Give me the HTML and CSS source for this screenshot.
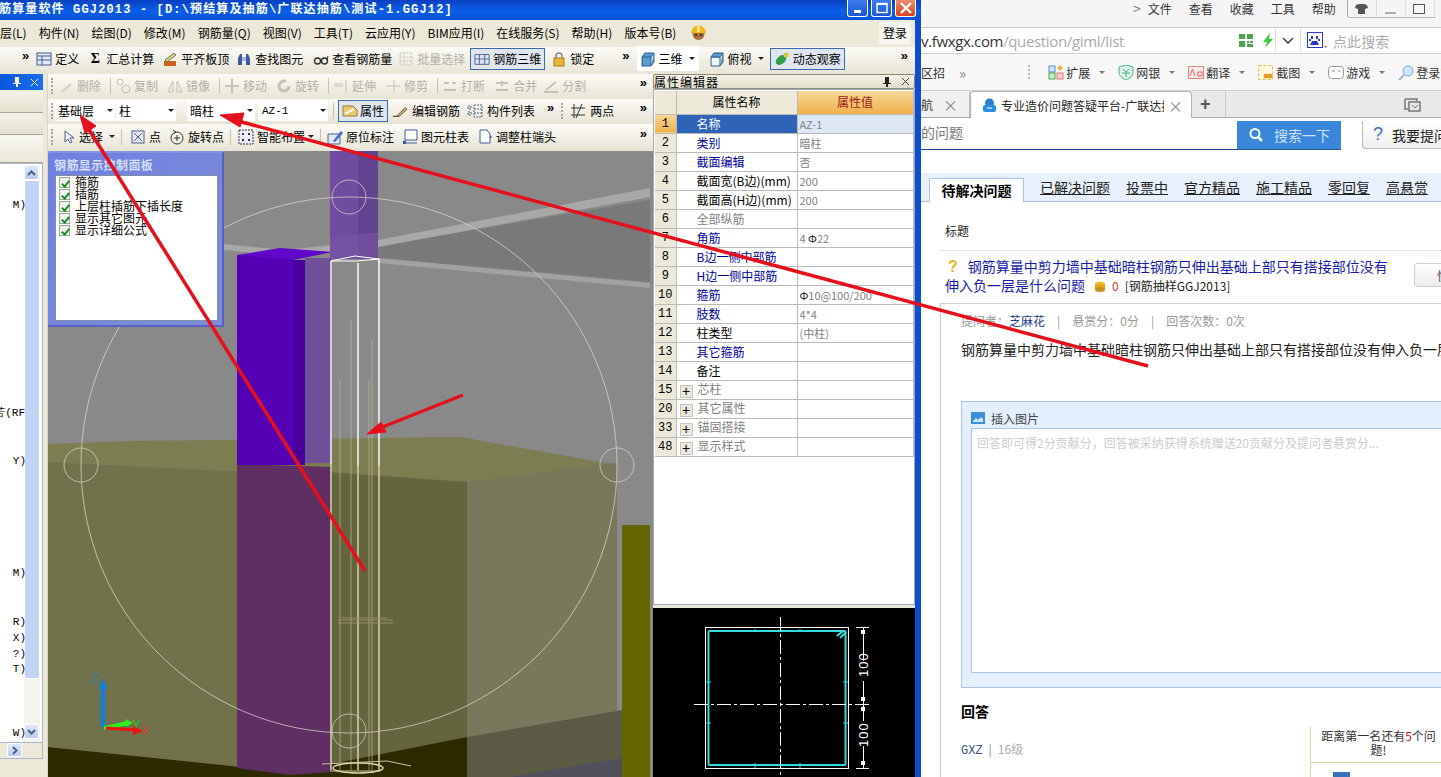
FILE: index.html
```html
<!DOCTYPE html>
<html lang="zh">
<head>
<meta charset="utf-8">
<title>钢筋算量软件 GGJ2013</title>
<link rel="stylesheet" href="styles.css">
</head>
<body>
<div class="desktop">

<section class="app">
  <header class="titlebar">
    <span class="title-text">筋算量软件 GGJ2013 - [D:\预结算及抽筋\广联达抽筋\测试-1.GGJ12]</span>
    <div class="winbtns">
      <span class="wb"><svg width="20" height="16"><rect x="6" y="10" width="7" height="3" fill="#fff"/></svg></span>
      <span class="wb"><svg width="20" height="16"><rect x="5" y="3.5" width="10" height="9" fill="none" stroke="#fff" stroke-width="1.4"/><rect x="5" y="3" width="10" height="2" fill="#fff"/></svg></span>
      <span class="wb wb-close"><svg width="20" height="16"><path d="M5 3l10 10M15 3L5 13" stroke="#fff" stroke-width="2.4"/></svg></span>
    </div>
  </header>

  <nav class="menubar">
    <span>层(L)</span><span>构件(N)</span><span>绘图(D)</span><span>修改(M)</span><span>钢筋量(Q)</span><span>视图(V)</span><span>工具(T)</span><span>云应用(Y)</span><span>BIM应用(I)</span><span>在线服务(S)</span><span>帮助(H)</span><span>版本号(B)</span>
    <svg class="helmet" width="17" height="17" viewBox="0 0 17 17"><circle cx="8.5" cy="10" r="6" fill="#a8703c"/><path d="M1 9a7.5 7.5 0 0 1 15 0z" fill="#f2b81e"/><rect x="7" y="2" width="3" height="6" fill="#ffe27a"/><circle cx="6" cy="11" r="1" fill="#222"/><circle cx="11" cy="11" r="1" fill="#222"/></svg>
    <span class="login">登录</span>
  </nav>

  <div class="tb tb-main">
    <span class="chev chev-first">»</span>
    <span class="tool t-def"><svg class="ic" viewBox="0 0 16 16"><rect x="1" y="2" width="14" height="12" fill="#dfe8f6" stroke="#44608c"/><path d="M1 5h14M6 5v9M1 9h14" stroke="#44608c"/></svg>定义</span>
    <span class="tool t-sum"><span class="sigma">Σ</span>汇总计算</span>
    <span class="tool t-flat"><svg class="ic" viewBox="0 0 16 16"><rect x="2" y="10" width="12" height="5" fill="#c8641c"/><path d="M3 9l9-7 2 2-9 7z" fill="#e8d24a" stroke="#5a7c9c"/></svg>平齐板顶</span>
    <span class="tool"><svg class="ic" viewBox="0 0 16 16"><path d="M2 14V7l2-4h2v11zM10 14V3h2l2 4v7z" fill="#3d5c9c"/><rect x="6" y="6" width="4" height="4" fill="#9fb7df"/></svg>查找图元</span>
    <span class="tool t-see"><svg class="ic" viewBox="0 0 16 16"><circle cx="4.5" cy="10" r="3" fill="none" stroke="#333" stroke-width="1.4"/><circle cx="11.5" cy="10" r="3" fill="none" stroke="#333" stroke-width="1.4"/><path d="M7 9h2M14 9l1-4" stroke="#333"/></svg>查看钢筋量</span>
    <span class="tool off t-batch"><svg class="ic" viewBox="0 0 16 16"><path d="M2 2h12v12H2zM2 6h12M2 10h12M6 2v12" fill="none" stroke="#c9c6b8" stroke-dasharray="2 1"/></svg>批量选择</span>
    <span class="tool on t-3d"><svg class="ic" viewBox="0 0 18 16"><path d="M1 3h16v11H1zM6 3v11M12 3v11M1 8h16" fill="none" stroke="#445a86"/></svg>钢筋三维</span>
    <span class="tool t-lock"><svg class="ic" viewBox="0 0 16 16"><rect x="3" y="7" width="10" height="8" fill="#e8b83a" stroke="#a5791a"/><path d="M5 7V5a3 3 0 0 1 6 0v2" fill="none" stroke="#888" stroke-width="1.5"/></svg>锁定</span>
    <span class="chev chev-a">»</span>
    <span class="combo-white">
      <span class="tool tight"><svg class="ic" viewBox="0 0 16 16"><path d="M2 6h9v9H2zM2 6l3-4h9l-3 4M11 15l3-4V2" fill="#5b9bd0" stroke="#2c5f8c"/></svg>三维</span><span class="caret"></span>
    </span>
    <span class="tool tight t-view"><svg class="ic" viewBox="0 0 16 16"><path d="M2 6h9v9H2z" fill="#eef6fb" stroke="#2c5f8c"/><path d="M2 6l3-4h9l-3 4zM11 15l3-4V2" fill="#5b9bd0" stroke="#2c5f8c"/></svg>俯视</span><span class="caret"></span>
    <span class="tool on t-orbit"><svg class="ic" viewBox="0 0 16 16"><ellipse cx="7" cy="9" rx="6" ry="4" transform="rotate(-40 7 9)" fill="#2f9e46"/><circle cx="12" cy="4" r="2.5" fill="#d8c83a"/></svg>动态观察</span>
    <span class="chev chev-end">»</span>
  </div>

  <div class="work">
    <aside class="side">
      <div class="side-head"><svg width="10" height="12" viewBox="0 0 10 12"><path d="M3 1h4v6h2v1H6v3H4V8H1V7h2z" fill="#fff"/></svg><svg width="9" height="9" viewBox="0 0 9 9"><path d="M1 1l7 7M8 1L1 8" stroke="#fff"/></svg></div>
      <div class="side-tab"></div>
      <div class="side-tab"></div>
      <div class="side-tab tall"></div>
      <div class="side-list">
        <div class="side-text">
          <span class="st st1">M)</span>
          <span class="st st2">苦(RF</span>
          <span class="st st3">Y)</span>
          <span class="st st4">M)</span>
          <span class="st st5">R)</span>
          <span class="st st6">X)</span>
          <span class="st st7">?)</span>
          <span class="st st8">T)</span>
          <span class="st st9">W)</span>
        </div>
        <div class="vscroll">
          <span class="sbtn"><svg width="9" height="6" viewBox="0 0 9 6"><path d="M1 5l3.500-3.500L8 5" fill="none" stroke="#4d6185" stroke-width="2"/></svg></span>
          <span class="thumb"></span>
          <span class="sbtn"><svg width="9" height="6" viewBox="0 0 9 6"><path d="M1 1l3.500 3.500L8 1" fill="none" stroke="#4d6185" stroke-width="2"/></svg></span>
        </div>
      </div>
      <div class="hscroll"><span class="sbtn sbtn-h"><svg width="6" height="9" viewBox="0 0 6 9"><path d="M1 1l3.500 3.500L1 8" fill="none" stroke="#4d6185" stroke-width="2"/></svg></span></div>
    </aside>

    <div class="center">
      <div class="tb tb-sub">
        <span class="grip"></span>
        <span class="tool off"><svg class="ic" viewBox="0 0 16 16"><path d="M2 14l10-9 2 2-8 7z" fill="#d8d5c8"/></svg>删除</span><span class="sep"></span>
        <span class="tool off"><svg class="ic" viewBox="0 0 16 16"><circle cx="5" cy="4" r="3" fill="none" stroke="#c5c2b4"/><circle cx="11" cy="11" r="4" fill="none" stroke="#c5c2b4"/></svg>复制</span>
        <span class="tool off"><svg class="ic" viewBox="0 0 16 16"><path d="M6 3v11H1zM10 3v11h5z" fill="none" stroke="#c5c2b4"/></svg>镜像</span><span class="sep"></span>
        <span class="tool off"><svg class="ic" viewBox="0 0 16 16"><path d="M8 1v14M1 8h14" stroke="#c5c2b4" stroke-width="2"/></svg>移动</span>
        <span class="tool off"><svg class="ic" viewBox="0 0 16 16"><path d="M13 8a5 5 0 1 1-3-4.500" fill="none" stroke="#c5c2b4" stroke-width="3"/></svg>旋转</span><span class="sep"></span>
        <span class="tool off"><svg class="ic" viewBox="0 0 16 16"><path d="M1 8h9M1 6h9M13 2v12" stroke="#c5c2b4"/></svg>延伸</span>
        <span class="tool off"><svg class="ic" viewBox="0 0 16 16"><path d="M1 8h14M9 2v12" stroke="#c5c2b4"/></svg>修剪</span><span class="sep"></span>
        <span class="tool off"><svg class="ic" viewBox="0 0 16 16"><path d="M2 12h12M2 5h5M10 5h4" stroke="#c5c2b4" stroke-width="2"/></svg>打断</span>
        <span class="tool off"><svg class="ic" viewBox="0 0 16 16"><path d="M2 12h12M2 5h12M8 3v5" stroke="#c5c2b4" stroke-width="2"/></svg>合并</span>
        <span class="tool off t-split"><svg class="ic" viewBox="0 0 16 16"><path d="M1 14h14M3 12L13 4" stroke="#c5c2b4" stroke-width="2"/></svg>分割</span>
        <span class="chev chev-sub">»</span>
      </div>

      <div class="tb tb-attr">
        <span class="grip"></span>
        <span class="combo c1">基础层<span class="caret"></span></span>
        <span class="combo c2">柱<span class="caret"></span></span>
        <span class="combo c3">暗柱<span class="caret"></span></span>
        <span class="combo c4">AZ-1<span class="caret"></span></span>
        <span class="sep"></span>
        <span class="tool on t-attr"><svg class="ic" viewBox="0 0 16 16"><path d="M1 3h10l4 4v6H1z" fill="#e9c978" stroke="#a5791a"/><path d="M3 11l9-5" stroke="#fff" stroke-width="2"/></svg>属性</span>
        <span class="tool t-edit"><svg class="ic" viewBox="0 0 18 16"><path d="M1 14h7" stroke="#222"/><path d="M6 13l9-9 2 2-9 8z" fill="#d9b04a" stroke="#555"/></svg>编辑钢筋</span>
        <span class="tool t-list"><svg class="ic" viewBox="0 0 16 16"><path d="M1 3h3v3H1zM1 9h3v3H1zM7 2h8v12H7zM7 6h8M7 10h8" fill="none" stroke="#4d6185" stroke-dasharray="2 1"/></svg>构件列表</span>
        <span class="chev chev-list">»</span>
        <span class="grip grip-b"></span>
        <span class="tool t-two"><svg class="ic" viewBox="0 0 16 16"><path d="M1 5h14M1 12h14M4 1v14M12 1L6 15" stroke="#333"/></svg>两点</span>
        <span class="chev chev-sub">»</span>
      </div>

      <div class="tb tb-draw">
        <span class="grip"></span>
        <span class="tool t-sel"><svg class="ic" viewBox="0 0 16 16"><path d="M5 2v11l3-3 2 4 2-1-2-4h4z" fill="#eef" stroke="#4d6185"/></svg>选择<span class="caret"></span></span><span class="sep"></span>
        <span class="tool t-pt"><svg class="ic" viewBox="0 0 16 16"><rect x="2" y="2" width="12" height="12" fill="#e8ecf8" stroke="#4d5c8c"/><path d="M4 4l8 8M12 4l-8 8" stroke="#4d5c8c"/></svg>点</span>
        <span class="tool t-rot"><svg class="ic" viewBox="0 0 16 16"><circle cx="8" cy="9" r="6" fill="none" stroke="#333"/><path d="M8 6v6M5 9h6M4 1l3 2-3 2" fill="none" stroke="#333"/></svg>旋转点</span><span class="sep"></span>
        <span class="tool t-smart"><svg class="ic" viewBox="0 0 16 16"><rect x="1" y="1" width="14" height="14" fill="#eef" stroke="#333" stroke-dasharray="2 1"/><path d="M4 4h2v2H4zM10 4h2v2h-2zM4 10h2v2H4zM10 10h2v2h-2z" fill="#333"/></svg>智能布置<span class="caret"></span></span><span class="sep"></span>
        <span class="tool t-orig"><svg class="ic" viewBox="0 0 16 16"><path d="M1 5h12v10H1z" fill="#dfe8f6" stroke="#4d6185"/><path d="M6 12l8-10 2 2-8 9z" fill="#3d6cc4"/></svg>原位标注</span>
        <span class="tool t-tbl"><svg class="ic" viewBox="0 0 16 16"><path d="M3 1h12v10H3z" fill="#fff" stroke="#3d5c9c"/><path d="M1 14h14M3 11v3" stroke="#3d5c9c"/><rect x="1" y="12" width="3" height="3" fill="#3d5c9c"/></svg>图元柱表</span>
        <span class="tool t-adj"><svg class="ic" viewBox="0 0 16 16"><path d="M3 1h7l3 4v9H3z" fill="#fff" stroke="#3d5c9c"/><path d="M13 6l2 2-2 2z" fill="#3d5c9c"/></svg>调整柱端头</span>
        <span class="chev chev-sub">»</span>
      </div>

      <div class="scene">
        <svg class="scene-svg" width="602" height="626" viewBox="48 151 602 626">
          <rect x="48" y="151" width="602" height="626" fill="#898989"/>
          <polygon points="378,246 650,200 650,282 378,258" fill="#797979"/>
          <polygon points="224,244 285,250 378,240 650,188 650,197 378,247 285,256 224,250" fill="#a8a8a8"/>
          <polygon points="378,258 650,283 650,288 378,263" fill="#a2a2a2"/>
          <rect x="622" y="525" width="28" height="252" fill="#666600"/>
          <polygon points="48,444 130,441 460,437 617,465 467,482 48,462" fill="#7d7d52"/>
          <polygon points="48,462 467,482 467,737 290,772 48,747" fill="#71714b"/>
          <polygon points="300,470 467,482 467,737 300,770" fill="#64643f"/>
          <polygon points="467,482 622,462 622,710 467,737" fill="#78785d"/>
          <polygon points="617,460 622,460 622,710 617,711" fill="#8a8a8a"/>
          <polygon points="467,737 622,710 622,777 467,777" fill="#5b5b45"/>
          <polygon points="510,777 622,758 622,777" fill="#50505a"/>
          <polygon points="48,747 290,772 467,737 467,777 48,777" fill="#2d2a00"/>
          <polygon points="237,464 331,467 331,772 290,775 237,768" fill="#5f2f63"/>
          <rect x="237" y="255" width="56" height="210" fill="#5500b5"/>
          <rect x="293" y="260" width="12" height="205" fill="#4a009c"/>
          <rect x="305" y="258" width="27" height="205" fill="#71509a"/>
          <polygon points="237,255 280,248 333,252 293,260" fill="#5f08c8"/>
          <rect x="330" y="151" width="28" height="108" fill="#6f4ca0"/>
          <rect x="358" y="151" width="20" height="108" fill="#624390"/>
          <polygon points="330,238 378,232 378,259 330,259" fill="#7b5aa8" opacity=".5"/>
          <g fill="none" stroke="#ddd8cc" opacity=".75">
            <circle cx="349" cy="465" r="268" stroke-width="1"/>
            <circle cx="349" cy="197" r="17"/>
            <circle cx="81" cy="465" r="17"/>
            <circle cx="617" cy="465" r="17"/>
            <circle cx="349" cy="731" r="17"/>
          </g>
          <g fill="none">
            <path d="M331 261h26l22-2-24-3-24 5" stroke="#fff"/>
            <path d="M331 261v203M358 263v203M379 259v207" stroke="#fff" stroke-width="1.500" opacity=".95"/>
            <path d="M331 464v306M358 466v304M379 466v304" stroke="#d9d4a8" stroke-width="1.500"/>
            <path d="M351 320v450M340 380v390M369 380v390M372 340v430" stroke="#c9c4a0" stroke-width="1" opacity=".6"/>
            <path d="M338 620h55M338 623h55M342 618h45" stroke="#9c9672" opacity=".8"/>
            <ellipse cx="358" cy="768" rx="25" ry="5" stroke="#d9d4a8" stroke-width="1.500"/>
            <path d="M322 764l65-3 24 5M330 771h50" stroke="#c9c4a0"/>
          </g>
          <g>
            <path d="M103 727v-40" stroke="#0a7fe8" stroke-width="4"/>
            <path d="M103 678l-4 11h8z" fill="#0a7fe8"/>
            <text x="91" y="683" class="axis axis-z">Z</text>
            <path d="M104 728l24-5" stroke="#2cf01c" stroke-width="4"/>
            <path d="M133 723l-8-4 1 8z" fill="#2cf01c"/>
            <text x="132" y="729" class="axis axis-y">Y</text>
            <path d="M106 728l30 2" stroke="#f01010" stroke-width="3"/>
            <path d="M143 731l-10-5v9z" fill="#f01010"/>
            <text x="141" y="735" class="axis axis-x">X</text>
          </g>
        </svg>
        <div class="panel">
          <div class="panel-title">钢筋显示控制面板</div>
          <div class="panel-body">
            <label class="chk"><span class="box"></span>箍筋</label>
            <label class="chk"><span class="box"></span>插筋</label>
            <label class="chk"><span class="box"></span>上层柱插筋下插长度</label>
            <label class="chk"><span class="box"></span>显示其它图元</label>
            <label class="chk"><span class="box"></span>显示详细公式</label>
          </div>
        </div>
      </div>
    </div>

    <aside class="props">
      <div class="props-head"><span>属性编辑器</span><span class="props-ctl"><svg width="10" height="12" viewBox="0 0 10 12"><path d="M3 1h4v6h2v1H6v3H4V8H1V7h2z" fill="#222"/></svg><svg width="9" height="9" viewBox="0 0 9 9"><path d="M1 1l7 7M8 1L1 8" stroke="#444"/></svg></span></div>
      <div class="props-grid">
        <table class="pt">
          <colgroup><col class="col-a"><col class="col-b"><col class="col-c"></colgroup>
          <tr class="hd"><th></th><th>属性名称</th><th class="hd-val">属性值</th></tr>
          <tr class="sel"><th>1</th><td class="nm">名称</td><td class="v">AZ-1</td></tr>
          <tr><th>2</th><td class="nm blue">类别</td><td class="v">暗柱</td></tr>
          <tr><th>3</th><td class="nm blue">截面编辑</td><td class="v">否</td></tr>
          <tr><th>4</th><td class="nm">截面宽(B边)(mm)</td><td class="v">200</td></tr>
          <tr><th>5</th><td class="nm">截面高(H边)(mm)</td><td class="v">200</td></tr>
          <tr><th>6</th><td class="nm gray">全部纵筋</td><td class="v"></td></tr>
          <tr><th>7</th><td class="nm blue">角筋</td><td class="v">4 <b class="rb">Φ</b>22</td></tr>
          <tr><th>8</th><td class="nm blue">B边一侧中部筋</td><td class="v"></td></tr>
          <tr><th>9</th><td class="nm blue">H边一侧中部筋</td><td class="v"></td></tr>
          <tr><th>10</th><td class="nm blue">箍筋</td><td class="v"><b class="rb">Φ</b>10@100/200</td></tr>
          <tr><th>11</th><td class="nm blue">肢数</td><td class="v">4*4</td></tr>
          <tr><th>12</th><td class="nm">柱类型</td><td class="v">(中柱)</td></tr>
          <tr><th>13</th><td class="nm blue">其它箍筋</td><td class="v"></td></tr>
          <tr><th>14</th><td class="nm">备注</td><td class="v"></td></tr>
          <tr><th>15</th><td class="nm gray grp"><span class="plus">+</span>芯柱</td><td class="v"></td></tr>
          <tr><th>20</th><td class="nm gray grp"><span class="plus">+</span>其它属性</td><td class="v"></td></tr>
          <tr><th>33</th><td class="nm gray grp"><span class="plus">+</span>锚固搭接</td><td class="v"></td></tr>
          <tr><th>48</th><td class="nm gray grp"><span class="plus">+</span>显示样式</td><td class="v"></td></tr>
        </table>
      </div>
      <div class="preview">
        <svg width="262" height="170" viewBox="653 607 262 170">
          <rect x="705.500" y="626.500" width="143" height="141" fill="none" stroke="#fff"/>
          <rect x="708.500" y="630" width="137" height="134" rx="1" fill="none" stroke="#30dcdc" stroke-width="2"/>
          <path d="M840 637l6-6M837 635l6-5" stroke="#30dcdc" stroke-width="2"/>
          <path d="M780.500 616v161M694 703.500h177" stroke="#fff" stroke-dasharray="14 3 3 3"/>
          <path d="M706 681h5M706 722h5M843 681h5M843 722h5M755 631v-3M800 631v-3M755 762v5M800 762v5" stroke="#30dcdc"/>
          <path d="M863.500 627v33M863.500 680v40M863.500 745v22M856 626.500h13M856 767.500h13" stroke="#fff"/>
          <path d="M861 629h4v4h-4zM861 696h4v4h-4zM861 706h4v4h-4zM861 760h4v4h-4z" fill="#fff"/>
          <text class="dim" transform="translate(868 676) rotate(-90)">100</text>
          <text class="dim" transform="translate(868 746) rotate(-90)">100</text>
        </svg>
      </div>
    </aside>
  </div>
</section>

<section class="browser">
  <div class="b-top">
    <span class="b-chev">&gt;</span>
    <span>文件</span><span>查看</span><span>收藏</span><span>工具</span><span>帮助</span>
    <div class="b-win">
      <span class="bw"><svg width="13" height="12" viewBox="0 0 13 12"><path d="M1 2l3-1h5l3 1 1 3-3 1v5H3V6L0 5z" fill="#555"/></svg></span>
      <span class="bw"><svg width="13" height="12" viewBox="0 0 13 12"><path d="M1 10h11" stroke="#666"/></svg></span>
      <span class="bw"><svg width="13" height="12" viewBox="0 0 13 12"><rect x=".5" y="1.500" width="11" height="9" fill="none" stroke="#555"/></svg></span>
    </div>
  </div>
  <div class="b-addr">
    <span class="url"><span class="url-d">v.fwxgx.com</span>/question/giml/list</span>
    <svg class="qr" width="14" height="13" viewBox="0 0 14 13"><path d="M0 0h6v5H0zM8 0h6v5H8zM0 7h6v6H0zM8 7h2v2H8zM11 7h3v2h-3zM8 10h6v3H8z" fill="#4aa84a"/></svg>
    <svg class="bolt" width="12" height="15" viewBox="0 0 12 15"><path d="M8 0L1 9h4l-2 6 8-9H7z" fill="#3dcc3d"/></svg>
    <span class="addr-sep"></span>
    <svg class="dd" width="12" height="7" viewBox="0 0 12 7"><path d="M1 1l5 5 5-5" fill="none" stroke="#444" stroke-width="1.600"/></svg>
    <span class="addr-sep"></span>
    <svg class="paw" width="20" height="17" viewBox="0 0 20 17"><rect x=".5" y=".5" width="15" height="15" fill="#fff" stroke="#2a3ac8"/><path d="M4 4h2v3H4zM9 4h2v3H9zM2 7h2v2H2zM11 7h2v2h-2zM5 9h5l2 4H3z" fill="#2a3ac8"/><path d="M17 14h3l-1.500 2z" fill="#777"/></svg>
    <span class="srch">点此搜索</span>
  </div>
  <div class="b-bar">
    <span class="bm-first">区招</span><span class="bm-more">»</span>
    <span class="bm-grip"></span>
    <span class="bm"><svg width="16" height="15" viewBox="0 0 16 15"><rect x="1" y="1" width="6" height="6" fill="#cfe4fa" stroke="#4d8fd8"/><rect x="1" y="8" width="6" height="6" fill="#cdeccc" stroke="#4aa84a"/><rect x="9" y="8" width="6" height="6" fill="#f7cfcf" stroke="#d87a7a"/><path d="M12 0l3 3-3 3-3-3z" fill="#f0b030"/></svg>扩展</span><span class="caret"></span>
    <span class="bm"><svg width="16" height="15" viewBox="0 0 16 15"><path d="M8 0l7 2v5c0 4-3 6-7 8-4-2-7-4-7-8V2z" fill="#e0f6ec" stroke="#3fb27f"/><path d="M5 4l3 3 3-3M4 8h8M8 7v5" fill="none" stroke="#3fb27f"/></svg>网银</span><span class="caret"></span>
    <span class="bm"><svg width="16" height="15" viewBox="0 0 16 15"><rect x=".5" y="1.500" width="15" height="12" fill="#fde8e8" stroke="#d88"/><path d="M2 11l2.500-7L7 11M10 7h4v4h-4z" fill="none" stroke="#d66"/></svg>翻译</span><span class="caret"></span>
    <span class="bm"><svg width="16" height="15" viewBox="0 0 16 15"><rect x=".5" y=".5" width="14" height="14" fill="#fff8e0" stroke="#e6b84a" stroke-dasharray="3 2"/><circle cx="8" cy="11" r="2.500" fill="#e89a2a"/><circle cx="12" cy="11" r="2.500" fill="#e89a2a"/></svg>截图</span><span class="caret"></span>
    <span class="bm"><svg width="16" height="15" viewBox="0 0 16 15"><rect x=".5" y="1.500" width="15" height="12" rx="3" fill="#fff" stroke="#999"/><path d="M4 6h3M10 6h2" stroke="#6a6"/></svg>游戏</span><span class="caret"></span>
    <span class="bm"><svg width="16" height="15" viewBox="0 0 16 15"><circle cx="10" cy="6" r="5" fill="#cfe6fb" stroke="#6fa8dc"/><path d="M6 10l-5 5" stroke="#a0b4c8" stroke-width="2"/></svg>登录管家</span>
  </div>
  <div class="b-tabs">
    <span class="tab-old">航<span class="tab-x">×</span></span>
    <span class="tab-cur"><svg width="15" height="15" viewBox="0 0 15 15"><circle cx="7.500" cy="5" r="4.500" fill="#2a7fd0"/><rect x="1" y="7" width="13" height="7" rx="2" fill="#2a8fe0"/><path d="M5 10h5" stroke="#fff"/></svg><span class="tab-label">专业造价问题答疑平台-广联达抽</span><span class="tab-x">×</span></span>
    <span class="tab-add">+</span>
    <svg class="tab-tool" width="18" height="14" viewBox="0 0 18 14"><path d="M1 1h12v2M1 1v10h3M5 4h11v9H5z" fill="none" stroke="#777" stroke-width="1.500"/><path d="M8 7l3 3 3-3" fill="none" stroke="#777"/></svg>
  </div>
  <div class="page">
    <div class="searchrow">
      <div class="searchbox">的问题</div>
      <button class="searchbtn"><svg width="16" height="16" viewBox="0 0 16 16"><circle cx="7" cy="6.500" r="4.500" fill="none" stroke="#fff" stroke-width="2"/><path d="M10 10l4 4" stroke="#fff" stroke-width="2.500"/></svg>搜索一下</button>
      <button class="askbtn"><span class="qm">?</span>我要提问</button>
    </div>

    <div class="qtabs">
      <span class="qtab-on">待解决问题</span>
      <a>已解决问题</a><a>投票中</a><a>官方精品</a><a>施工精品</a><a>零回复</a><a>高悬赏</a>
    </div>

    <div class="th-label">标题</div>
    <div class="qrow">
      <div class="qtitle"><span class="qicon">?</span>钢筋算量中剪力墙中基础暗柱钢筋只伸出基础上部只有搭接部位没有伸入负一层是什么问题<svg class="coin" width="12" height="11" viewBox="0 0 12 11"><ellipse cx="6" cy="3" rx="5" ry="2.500" fill="#f1c02c"/><rect x="1" y="3" width="10" height="6" fill="#e0a81e"/><ellipse cx="6" cy="8.500" rx="5" ry="2.500" fill="#c9901a"/></svg><span class="zero">0</span><span class="qcat">[钢筋抽样GGJ2013]</span></div>
      <button class="quick">快</button>
    </div>

    <div class="qbox">
      <div class="meta">提问者：<a>芝麻花</a><i>|</i>悬赏分：0分<i>|</i>回答次数：0次</div>
      <div class="body-text">钢筋算量中剪力墙中基础暗柱钢筋只伸出基础上部只有搭接部位没有伸入负一层是什么问题</div>
      <div class="editor">
        <div class="ed-bar"><svg width="14" height="12" viewBox="0 0 14 12"><rect width="14" height="12" fill="#3d8ed8"/><path d="M2 9l3-3 2 2 3-3 2 2v3H2z" fill="#cfe6fb"/></svg>插入图片</div>
        <div class="ed-area">回答即可得2分贡献分，回答被采纳获得系统赠送20贡献分及提问者悬赏分...</div>
      </div>
      <div class="ans">
        <h4>回答</h4>
        <div class="ans-user"><a>GXZ</a><i>|</i>16级</div>
        <div class="rank"><div class="rank-t">距离第一名还有<em>5</em>个问题!</div><span class="rank-ic"></span></div>
      </div>
    </div>
  </div>
</section>

<svg class="arrows" width="1441" height="777" viewBox="0 0 1441 777">
  <g fill="#e5101c" stroke="#e5101c">
    <path d="M1148 366L238 121" stroke-width="3.500"/>
    <path d="M220 115l24-2-4 14z"/>
    <path d="M365 571L88 128" stroke-width="3.500"/>
    <path d="M80 115l16 11-11 7z"/>
    <path d="M463 395L380 428" stroke-width="3"/>
    <path d="M367 434l14-12 5 10z"/>
  </g>
</svg>

</div>
</body>
</html>
```

FILE: styles.css
```css
* { box-sizing: border-box; }
html, body { margin: 0; padding: 0; height: 100%; overflow: hidden; }
body { font: 12px "Noto Sans CJK SC", "Liberation Sans", sans-serif; color: #000; }
.desktop { position: relative; display: flex; width: 1441px; height: 777px; overflow: hidden; }

/* ---- application window ---- */
.app { width: 921px; height: 777px; flex: none; display: flex; flex-direction: column; background: #ece9d8; border-right: 6px solid #0a4fd0; position: relative; }
.titlebar { height: 20px; flex: none; display: flex; align-items: center; justify-content: space-between; background: linear-gradient(#0a3fc0, #0a5ee8 55%, #0653d8); margin-right: -6px; padding-right: 6px; overflow: hidden; }
.title-text { color: #fff; font: 700 12px "Liberation Mono", "Noto Sans CJK SC", monospace; letter-spacing: 1.15px; white-space: nowrap; margin-left: -1px; line-height: 18px; }
.winbtns { display: flex; gap: 3px; align-items: flex-start; height: 20px; margin-right: -1px; }
.wb { width: 21px; height: 17px; background: linear-gradient(#3f7df0, #1d55d0); border: 1px solid #fff; border-top: 0; border-radius: 0 0 3px 3px; display: flex; }
.wb-close { background: linear-gradient(#f08c6c, #d8431c); }

.menubar { height: 27px; flex: none; display: flex; align-items: center; gap: 12px; padding-bottom: 2px; white-space: nowrap; }
.helmet { margin-left: 2px; }
.login { margin-left: auto; margin-right: 4px; background: #f5f4ee; padding: 0 4px; line-height: 22px; }

.tb { display: flex; align-items: center; white-space: nowrap; background: linear-gradient(#fbfaf5, #e8e5d6); flex: none; position: relative; }
.tb-main { height: 27px; padding: 0 0 4px 22px; }
.tb-sub { height: 25px; padding: 0 0 2px 2px; }
.tb-attr { height: 25px; padding: 0 0 2px 2px; }
.tb-draw { height: 27px; padding: 0 0 2px 2px; }

.tool { display: inline-flex; align-items: center; gap: 3px; height: 23px; padding: 0 3px; font-size: 12px; margin-right: 4px; flex: none; }
.tool.tight { margin-right: 0; padding-right: 0; }
.tool.off { color: #b4b1a4; }
.tool.on { background: #dfe6f2; border: 1px solid #3d6aa8; height: 22px; }
.ic { width: 16px; height: 16px; flex: none; }
.sigma { font-weight: 700; width: 16px; text-align: center; font-size: 14px; font-family: "Liberation Serif", serif; }
.chev { font-size: 13px; font-weight: 700; line-height: 1; position: relative; top: -3px; font-family: "Liberation Sans", sans-serif; }
.chev-first { margin-right: 4px; }
.t-def { margin-right: 2px; }
.t-sum { margin-right: 2px; }
.t-flat { margin-right: 1px; }
.t-see { margin-right: 0; }
.t-batch { margin-right: 1px; }
.t-3d { margin: 0 3px 0 1px; }
.t-lock { margin-right: 25px; }
.chev-a { margin-right: 7px; }
.combo-white { display: inline-flex; align-items: center; background: #fff; height: 25px; padding-right: 4px; margin-right: 7px; }
.t-orbit { margin-left: 6px; }
.chev-end { margin-left: auto; margin-right: 7px; }
.caret { display: inline-block; width: 0; height: 0; border: 3px solid transparent; border-top: 3px solid #222; border-bottom: 0; margin-left: 6px; flex: none; }

.work { flex: 1; display: flex; min-height: 0; }

/* left dock */
.side { width: 48px; flex: none; display: flex; flex-direction: column; padding-right: 4px; border-right: 1px solid #d8d5c4; }
.side-head { height: 16px; flex: none; background: linear-gradient(90deg, #0a56dc, #1a6cf0); display: flex; align-items: center; justify-content: flex-end; gap: 8px; padding-right: 4px; margin-bottom: 1px; }
.side-tab { height: 22px; flex: none; background: linear-gradient(#f4f2e8, #e4e1d0); border-bottom: 1px solid #a8a698; }
.side-tab.tall { height: 28px; background: linear-gradient(#f7f6f0, #ece9d8); }
.side-list { flex: none; height: 580px; display: flex; background: #fff; border: 1px solid #a7b6c8; border-left: 0; padding-top: 1px; }
.side-text { flex: 1; position: relative; font-family: "Liberation Mono", monospace; }
.st { position: absolute; right: -2px; line-height: 12px; font-size: 11px; white-space: nowrap; }
.st1 { top: 34px; }
.st2 { top: 242px; right: -1px; }
.st3 { top: 290px; }
.st4 { top: 402px; }
.st5 { top: 451px; }
.st6 { top: 467px; }
.st7 { top: 483px; }
.st8 { top: 498px; }
.st9 { top: 562px; }
.vscroll { width: 16px; flex: none; display: flex; flex-direction: column; background: #f4f3ee; margin-right: 2px; }
.sbtn { width: 15px; height: 15px; flex: none; background: linear-gradient(#dee8fb, #b8ccf0); border: 1px solid #fff; border-radius: 2px; display: flex; align-items: center; justify-content: center; }
.thumb { height: 499px; flex: none; background: #c3d3f6; border: 1px solid #fff; border-radius: 2px; margin-bottom: 45px; }
.hscroll { height: 16px; flex: none; background: #ece9d8; border: 1px solid #a7b6c8; border-left: 0; border-top: 0; padding-left: 7px; display: flex; }
.sbtn-h { height: 14px; }

/* centre */
.center { width: 605px; flex: none; display: flex; flex-direction: column; }
.grip { width: 3px; height: 16px; margin: 0 1px; flex: none; border-left: 2px dotted #a8a698; }
.grip-b { margin: 0 6px 0 7px; }
.chev-sub { margin-left: auto; margin-right: 6px; }
.sep { width: 1px; height: 16px; background: #c4c1b1; flex: none; }

.tb-sub .grip { margin-right: 4px; }
.tb-sub .tool { padding: 0; margin-right: 9px; }
.tb-sub .sep { margin: 0 4px 0 0; }
.tb-sub .t-split { margin-left: -3px; }

.combo { display: inline-flex; justify-content: space-between; align-items: center; height: 21px; background: #fff; padding: 0 2px 0 3px; font-size: 12px; flex: none; }
.c1 { width: 60px; margin-right: 1px; }
.c2 { width: 60px; margin-right: 11px; }
.c3 { width: 68px; margin-right: 3px; }
.c4 { width: 70px; font-family: "Liberation Mono", monospace; font-size: 11px; padding-left: 4px; }
.tb-attr .sep { margin: 0 4px 0 5px; }
.tb-attr .tool { margin: 0; padding: 0; }
.tb-attr .t-attr { padding: 0 3px; gap: 2px; }
.tb-attr .t-edit { margin-left: 4px; gap: 4px; }
.tb-attr .t-list { margin-left: 7px; gap: 4px; }
.tb-attr .t-two { gap: 4px; }
.chev-list { margin-left: 12px; }

.tb-draw .tool { margin: 0; padding: 0; }
.tb-draw .sep { margin: 0 6px; }
.tb-draw .t-sel { margin-left: 5px; }
.tb-draw .t-sel .caret { margin-left: 3px; }
.tb-draw .t-pt { margin-left: 2px; }
.tb-draw .t-rot { margin-left: 8px; }
.tb-draw .t-smart { margin-left: 1px; }
.tb-draw .t-smart .caret { margin-left: 0; }
.tb-draw .t-tbl { margin-left: 8px; }
.tb-draw .t-adj { margin-left: 8px; }

.scene { position: relative; flex: 1; min-height: 0; overflow: hidden; background: #898989; }
.scene-svg { display: block; }
.axis { font-size: 13px; font-family: "Liberation Sans", sans-serif; }
.axis-z { fill: #3b78a8; }
.axis-y { fill: #28c828; }
.axis-x { fill: #d04030; }

.panel { position: absolute; left: 0; top: 0; width: 176px; height: 176px; padding: 4px 4px 4px; background: linear-gradient(135deg, #6f80e0, #7d8ed8); border-right: 2px solid #5b5fc0; border-bottom: 2px solid #5b5fc0; border-top: 2px solid #8593e6; }
.panel-title { color: #d4def8; font-weight: 700; font-size: 12px; line-height: 15px; height: 15px; letter-spacing: .4px; margin-left: 2px; }
.panel-body { height: 146px; margin: 3px 0 0 3px; background: #fff; border: 1px solid #7f8fa8; padding: 0 0 0 3px; }
.chk { display: flex; align-items: center; gap: 5px; height: 12px; line-height: 12px; font-size: 12px; white-space: nowrap; }
.box { width: 11px; height: 11px; background: #eef5ee; border: 1px solid #9aa894; position: relative; flex: none; }
.box::after { content: ""; position: absolute; left: 3px; top: 1px; width: 3px; height: 6px; border: solid #1d8a2a; border-width: 0 2px 2px 0; transform: rotate(40deg); }

/* properties */
.props { width: 262px; flex: none; display: flex; flex-direction: column; }
.props-head { height: 15px; flex: none; display: flex; justify-content: space-between; align-items: center; padding: 0 4px 0 0; background: linear-gradient(#f4f2e6, #e2dfcc); border: 1px solid #8c8a78; font-size: 12px; letter-spacing: 1px; border-radius: 2px; }
.props-ctl { display: flex; gap: 9px; align-items: center; }
.props-grid { height: 516px; flex: none; background: #fff; border: 1px solid #9ea9b4; padding: 1px 0 0 1px; overflow: hidden; }
.pt { border-collapse: collapse; table-layout: fixed; width: 258px; font-size: 12px; }
.col-a { width: 21px; }
.col-b { width: 121px; }
.col-c { width: 116px; }
.pt tr { height: 19px; }
.pt tr.hd { height: 23px; }
.pt th { font-weight: 400; background: #ece9d8; border: 1px solid #b9bbb8; border-width: 0 1px 1px 0; padding: 0; text-align: center; font-family: "Liberation Mono", monospace; font-size: 12px; line-height: 16px; }
.pt td { border: 1px solid #b9bbb8; border-width: 0 1px 1px 0; padding: 0 0 0 2px; line-height: 16px; white-space: nowrap; overflow: hidden; }
.pt .hd th { background: #ece9d8; font-family: inherit; letter-spacing: 0; }
.pt .hd .hd-val { background: linear-gradient(#f8d898, #eeb04c); color: #a01818; }
.nm { padding-left: 20px !important; }
.grp { padding-left: 2px !important; }
.blue { color: #0000a0; }
.gray { color: #808080; }
.v { color: #808080; font-size: 11px; }
.rb { color: #222; font-weight: 400; }
.plus { display: inline-block; width: 13px; height: 13px; line-height: 11px; text-align: center; background: #eceae0; border: 1px solid #c8c6b8; color: #000; font-size: 14px; margin: 0 5px 0 1px; vertical-align: -2px; font-family: "Liberation Sans", sans-serif; }
.sel th { background: linear-gradient(#f8d898, #eeb04c); }
.sel .nm { background: #2f63b8; color: #fff; }
.sel .v { background: #dde7f3; }
.preview { margin-top: 3px; flex: none; height: 170px; background: #000; }
.preview svg { display: block; }
.dim { fill: #fff; font: 13px "Liberation Sans", sans-serif; letter-spacing: 1px; }

/* ---- browser ---- */
.browser { flex: 1; min-width: 0; background: #fff; display: flex; flex-direction: column; overflow: hidden; border-left: 1px solid #0a1f8c; margin-left: -1px; }
.b-top { height: 28px; flex: none; display: flex; align-items: flex-start; background: #f5f5f5; padding-left: 212px; gap: 17px; color: #333; border-bottom: 1px solid #c8c8c8; white-space: nowrap; line-height: 17px; }
.b-chev { color: #777; font-size: 14px; margin-right: -10px; }
.b-win { display: flex; margin-left: -6px; height: 18px; border-left: 1px solid #aaa; border-bottom: 1px solid #bbb; border-radius: 0 0 0 3px; }
.bw { width: 29px; height: 17px; display: flex; align-items: center; justify-content: center; border-right: 1px solid #ddd; }
.b-addr { height: 26px; flex: none; display: flex; align-items: center; background: #fff; border-bottom: 1px solid #cfcfcf; white-space: nowrap; }
.url { font: 15px "Open Sans", "Liberation Sans", sans-serif; color: #aaa; width: 318px; flex: none; overflow: hidden; letter-spacing: -.35px; }
.url-d { color: #333; }
.qr { margin-right: 9px; flex: none; }
.bolt { margin-right: 1px; flex: none; }
.addr-sep { width: 1px; height: 26px; background: #e0e0e0; flex: none; }
.dd { margin: 0 6px; flex: none; }
.paw { margin-left: 6px; flex: none; }
.srch { font-size: 14px; color: #aaa; margin-left: 6px; letter-spacing: .1px; }
.b-bar { height: 37px; flex: none; display: flex; align-items: center; background: #f7f7f7; border-bottom: 1px solid #cfcfcf; white-space: nowrap; }
.bm-first { font-size: 12px; color: #333; }
.bm-more { color: #888; font-size: 15px; margin-left: 14px; }
.bm-grip { width: 3px; height: 14px; border-left: 2px dotted #bbb; margin: 0 17px 0 62px; flex: none; }
.bm { display: inline-flex; align-items: center; gap: 2px; color: #333; flex: none; }
.b-bar .caret { margin: 0 13px 0 9px; border-top-color: #777; }
.b-tabs { height: 27px; flex: none; display: flex; align-items: flex-end; background: #e9e9e9; border-bottom: 1px solid #aaa; white-space: nowrap; position: relative; }
.tab-old { width: 49px; height: 26px; display: flex; align-items: center; color: #333; background: #f0f0f0; border-right: 1px solid #bbb; justify-content: space-between; padding-right: 11px; }
.tab-x { color: #888; font-size: 15px; line-height: 1; }
.tab-cur { width: 222px; height: 27px; margin-bottom: -1px; display: flex; align-items: center; gap: 4px; background: #fff; border: 1px solid #b5b5b5; border-bottom: 0; border-radius: 4px 4px 0 0; padding-left: 11px; }
.tab-label { width: 163px; overflow: hidden; color: #222; }
.tab-add { color: #555; font-size: 18px; font-weight: 700; margin-left: 8px; line-height: 26px; width: 26px; border-right: 1px solid #ccc; font-family: "Liberation Sans", sans-serif; }
.tab-tool { position: absolute; right: 19px; top: 7px; }
.page { flex: 1; min-height: 0; position: relative; overflow: hidden; }
.searchrow { height: 33px; display: flex; align-items: flex-start; }
.searchbox { width: 316px; flex: none; height: 32px; border-bottom: 1px solid #1a4c9c; font-size: 14px; color: #777; line-height: 29px; }
.searchbtn { width: 104px; flex: none; height: 29px; margin-top: 3px; border: 0; border-bottom: 1px solid #2a5a9c; background: #3a86d8; color: #cfe2f8; font: 14px "Noto Sans CJK SC", sans-serif; display: flex; align-items: center; justify-content: center; gap: 10px; padding: 0; }
.askbtn { width: 90px; height: 28px; margin: 3px 0 0 21px; flex: none; border: 1px solid #bbb; border-top: 0; border-radius: 0 0 4px 4px; background: linear-gradient(#fff, #eee); font: 14px "Noto Sans CJK SC", sans-serif; text-align: left; padding: 0 0 0 10px; display: flex; align-items: center; gap: 9px; white-space: nowrap; color: #222; }
.qm { color: #3a70b8; font: 18px "Liberation Sans", sans-serif; }
.qtabs { height: 29px; margin-top: 22px; display: flex; align-items: flex-end; background: #e8f1fb; border-bottom: 1px solid #a9c5e4; padding-left: 8px; gap: 16px; font-size: 14px; white-space: nowrap; }
.qtabs a { color: #222; text-decoration: underline; line-height: 27px; }
.qtab-on { width: 95px; height: 24px; line-height: 22px; text-align: center; font-weight: 700; background: #fff; border: 1px solid #a9c5e4; border-bottom: 0; margin-bottom: -1px; }
.th-label { margin: 20px 0 0 24px; height: 18px; line-height: 18px; font-size: 12px; color: #222; }
.qrow { display: flex; margin: 10px 0 0 19px; border-top: 1px dotted #ccc; padding: 6px 0 0 5px; height: 48px; white-space: nowrap; }
.qtitle { width: 450px; flex: none; white-space: normal; font-size: 14px; line-height: 18px; color: #1a1aa8; }
.qicon { color: #e8b820; font-weight: 700; font-size: 16px; margin: 0 10px 0 3px; font-family: "Liberation Sans", sans-serif; }
.coin { margin: 0 3px 0 9px; vertical-align: -1px; }
.zero { color: #d04040; font-size: 12px; margin: 0 6px 0 3px; }
.qcat { font-size: 12px; color: #222; }
.quick { width: 40px; height: 24px; margin: 6px 0 0 19px; flex: none; border: 1px solid #ccc; border-radius: 3px; background: linear-gradient(#fff, #ececec); font: 12px "Noto Sans CJK SC", sans-serif; padding: 0 0 0 22px; text-align: left; color: #555; }
.qbox { margin: 5px 0 0 19px; border: 1px solid #ccc; border-right: 0; height: 600px; padding: 8px 0 0 20px; width: 520px; white-space: nowrap; }
.meta { color: #999; font-size: 12px; line-height: 18px; }
.meta a { color: #1a3c88; }
.meta i { font-style: normal; margin: 0 12px; }
.body-text { margin-top: 10px; font-size: 14px; line-height: 18px; color: #222; overflow: hidden; width: 500px; }
.editor { margin-top: 43px; width: 540px; height: 287px; background: #e3effc; border: 1px solid #a9c5e4; padding: 0 0 14px 9px; }
.ed-bar { height: 26px; display: flex; align-items: center; gap: 6px; color: #444; padding-top: 6px; font-size: 12px; }
.ed-area { height: 245px; background: #fff; border: 1px solid #a9c5e4; color: #ccc; padding: 5px 0 0 5px; font-size: 12px; line-height: 18px; }
.ans { position: relative; }
.ans h4 { margin: 14px 0 0; font-size: 14px; line-height: 18px; font-weight: 700; }
.ans-user { margin-top: 20px; font-size: 12px; color: #aaa; line-height: 18px; }
.ans-user a { color: #3a5480; font-family: "Liberation Mono", monospace; }
.ans-user i { font-style: normal; margin: 0 6px; color: #888; }
.rank { position: absolute; left: 349px; top: 25px; width: 140px; height: 60px; border-left: 1px solid #d4cfa8; }
.rank-t { white-space: normal; text-align: center; font-size: 12px; line-height: 14px; padding: 2px 0 0 5px; height: 36px; border-bottom: 1px solid #d4cfa8; width: 130px; color: #333; }
.rank-t em { color: #b01818; font-style: normal; }
.rank-ic { position: absolute; left: 22px; top: 45px; width: 17px; height: 12px; background: #3a70b8; }

.arrows { position: absolute; left: 0; top: 0; pointer-events: none; }
```
